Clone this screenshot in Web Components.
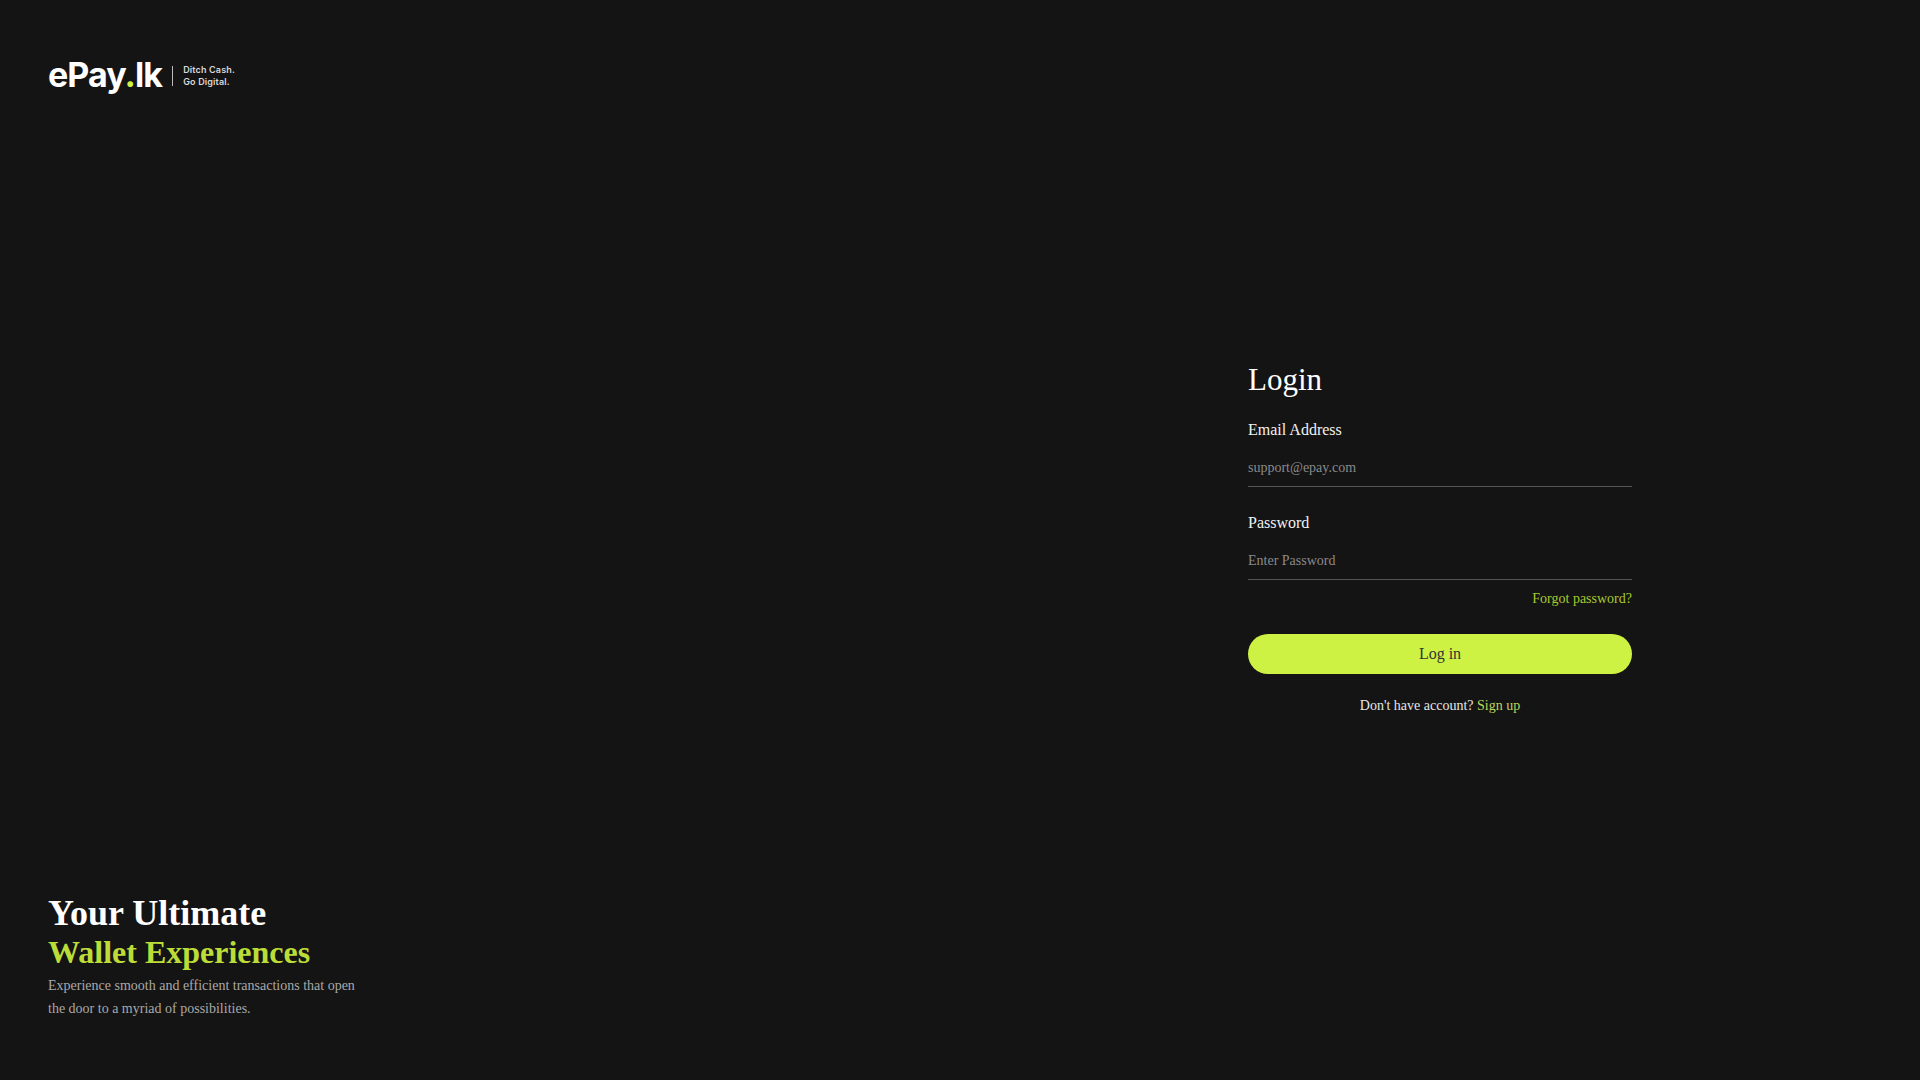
<!DOCTYPE html>
<html>
<head>
<meta charset="utf-8">
<title>ePay.lk Login</title>
<style>
  html, body { margin: 0; height: 100%; background: #141414; }
  body { font-family: "Liberation Serif", "Times New Roman", serif; }
</style>
</head>
<body>
<login-page>
  <brand-panel slot="left"></brand-panel>
  <login-form slot="right"></login-form>
</login-page>

<script>
class LoginPage extends HTMLElement {
    constructor() {
        super();
        this.attachShadow({ mode: 'open' });
        this.shadowRoot.innerHTML = `
            <style>
                :host {
                    display: grid;
                    grid-template-columns: 1fr 1fr;
                    height: 1080px;
                    background: #141414;
                    color: #fff;
                }
            </style>
            <slot name="left"></slot>
            <slot name="right"></slot>
        `;
    }
}

class EpayLogo extends HTMLElement {
    constructor() {
        super();
        this.attachShadow({ mode: 'open' });
        this.shadowRoot.innerHTML = `
            <style>
                :host {
                    display: flex;
                    align-items: center;
                    height: 36px;
                    font-family: Inter, "Noto Sans", sans-serif;
                    color: #fff;
                }
                .name {
                    font-size: 34px;
                    font-weight: 700;
                    letter-spacing: -0.9px;
                    line-height: 36px;
                }
                .dot { color: #cef243; }
                .sep {
                    width: 1px;
                    height: 20px;
                    margin: 2px 10px 0 10px;
                    background: #bbb;
                }
                .tag {
                    font-size: 9px;
                    font-weight: 600;
                    letter-spacing: 0.15px;
                    line-height: 12px;
                    color: #d8d8d8;
                    margin-top: 1px;
                }
            </style>
            <span class="name">ePay<span class="dot">.</span>lk</span>
            <span class="sep"></span>
            <span class="tag">Ditch Cash.<br>Go Digital.</span>
        `;
    }
}

class BrandPanel extends HTMLElement {
    constructor() {
        super();
        this.attachShadow({ mode: 'open' });
        this.shadowRoot.innerHTML = `
            <style>
                :host {
                    display: flex;
                    flex-direction: column;
                    justify-content: space-between;
                    padding: 57px 48px 60px;
                }
                h1 {
                    margin: 0 0 2px;
                    font-size: 36px;
                    line-height: 39px;
                    font-weight: 700;
                    color: #fff;
                }
                h1 span { display: block; font-size: 32px; color: #bcdc38; }
                p {
                    margin: 0;
                    width: 320px;
                    font-size: 14px;
                    line-height: 23px;
                    color: #a9a9a9;
                }
            </style>
            <epay-logo></epay-logo>
            <div>
                <h1>Your Ultimate<span>Wallet Experiences</span></h1>
                <p>Experience smooth and efficient transactions that open the door to a myriad of possibilities.</p>
            </div>
        `;
    }
}

class TextField extends HTMLElement {
    constructor() {
        super();
        this.attachShadow({ mode: 'open' });
        this.shadowRoot.innerHTML = `
            <style>
                :host { display: block; }
                label {
                    display: block;
                    font-size: 16px;
                    line-height: 18px;
                    color: #f2f2f2;
                    margin-bottom: 12px;
                }
                input {
                    display: block;
                    box-sizing: border-box;
                    width: 100%;
                    height: 36px;
                    padding: 0;
                    border: 0;
                    border-bottom: 1px solid #555;
                    background: transparent;
                    color: #fff;
                    outline: none;
                    font: 14px "Liberation Serif", "Times New Roman", serif;
                }
                input::placeholder { color: #8a8a8a; opacity: 1; }
            </style>
            <label></label>
            <input>
        `;
    }

    connectedCallback() {
        this.shadowRoot.querySelector('label').textContent = this.getAttribute('label');
        const input = this.shadowRoot.querySelector('input');
        input.placeholder = this.getAttribute('placeholder') || '';
        input.type = this.getAttribute('type') || 'text';
    }
}

class LoginForm extends HTMLElement {
    constructor() {
        super();
        this.attachShadow({ mode: 'open' });
        this.shadowRoot.innerHTML = `
            <style>
                :host {
                    display: flex;
                    flex-direction: column;
                    justify-content: center;
                    align-items: center;
                    padding-bottom: 6px;
                }
                form {
                    width: 384px;
                    display: flex;
                    flex-direction: column;
                }
                h2 {
                    margin: 0 0 21px;
                    font-size: 31px;
                    line-height: 40px;
                    font-weight: 400;
                    color: #fff;
                }
                text-field + text-field { margin-top: 27px; }
                a { color: #a8c92f; text-decoration: none; }
                .forgot {
                    align-self: flex-end;
                    margin-top: 10px;
                    font-size: 14px;
                    line-height: 18px;
                }
                button {
                    height: 40px;
                    margin-top: 26px;
                    border: 0;
                    border-radius: 20px;
                    background: #cef243;
                    color: #333;
                    font: 16px "Liberation Serif", "Times New Roman", serif;
                }
                .signup {
                    margin: 23px 0 0;
                    text-align: center;
                    font-size: 14px;
                    line-height: 18px;
                    color: #e6e6e6;
                }
                .signup a { color: #bcd65a; }
            </style>
            <form>
                <h2>Login</h2>
                <text-field label="Email Address" placeholder="support@epay.com" type="email"></text-field>
                <text-field label="Password" placeholder="Enter Password" type="password"></text-field>
                <a class="forgot" href="#">Forgot password?</a>
                <button type="button">Log in</button>
                <p class="signup">Don't have account? <a href="#">Sign up</a></p>
            </form>
        `;
    }
}

customElements.define('login-page', LoginPage);
customElements.define('epay-logo', EpayLogo);
customElements.define('brand-panel', BrandPanel);
customElements.define('text-field', TextField);
customElements.define('login-form', LoginForm);
</script>
</body>
</html>
